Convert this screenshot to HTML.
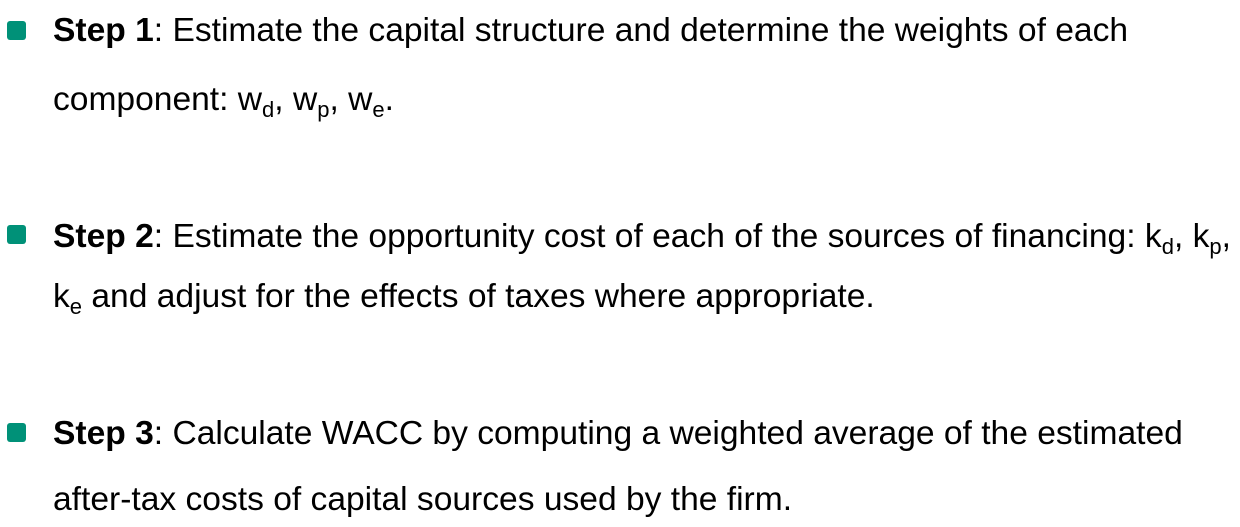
<!DOCTYPE html>
<html><head><meta charset="utf-8"><style>
body{margin:0;width:1240px;height:527px;background:#fff;position:relative;overflow:hidden;font-family:"Liberation Sans",Arial,sans-serif;color:#000}
.l{position:absolute;left:53px;font-size:33.6px;line-height:32px;white-space:nowrap}
.b{position:absolute;left:7px;width:19px;height:19px;background:#009178;border-radius:3px}
sub{font-size:22px;vertical-align:-7px;line-height:0}
</style></head><body>
<div class="b" style="top:21px"></div>
<div class="l" style="top:15px"><b>Step 1</b>: Estimate the capital structure and determine the weights of each</div>
<div class="l" style="top:84px">component: w<sub>d</sub>, w<sub>p</sub>, w<sub>e</sub>.</div>
<div class="b" style="top:225px"></div>
<div class="l" style="top:221px"><b>Step 2</b>: Estimate the opportunity cost of each of the sources of financing: k<sub>d</sub>, k<sub>p</sub>,</div>
<div class="l" style="top:281px">k<sub>e</sub> and adjust for the effects of taxes where appropriate.</div>
<div class="b" style="top:423px"></div>
<div class="l" style="top:418px"><b>Step 3</b>: Calculate WACC by computing a weighted average of the estimated</div>
<div class="l" style="top:484px">after-tax costs of capital sources used by the firm.</div>
</body></html>
